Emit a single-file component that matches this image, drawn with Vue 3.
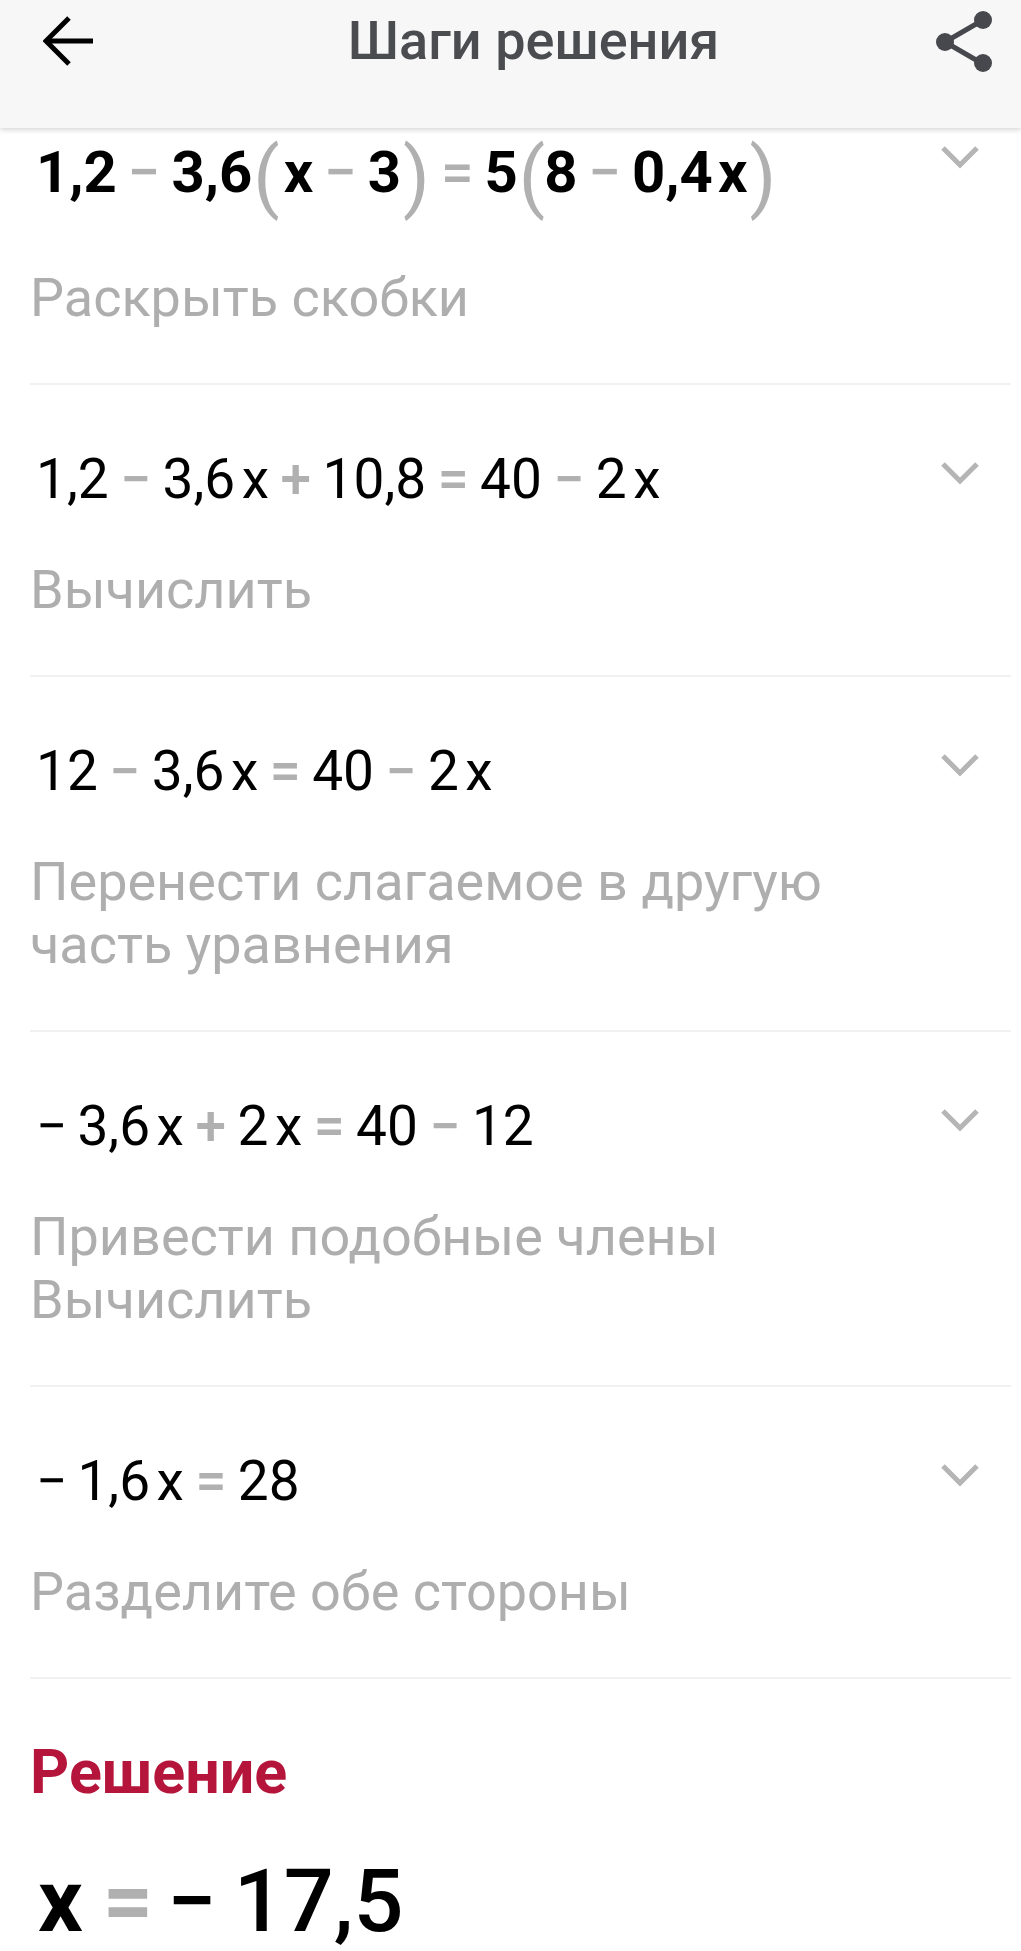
<template>
  <div class="page">
    <header class="top-bar">
      <svg class="back" width="50" height="50" viewBox="0 0 50 50" fill="none" stroke="#000" stroke-width="5">
        <path d="M50 25H3" />
        <path d="M26 2L3 25l23 23" />
      </svg>
      <h1 class="title">Шаги решения</h1>
      <svg class="share" width="60" height="62" viewBox="0 0 60 62" fill="#46484d" stroke="#46484d">
        <path d="M51 10L13 32l38 22" fill="none" stroke-width="5" />
        <circle cx="51" cy="10" r="9" stroke="none" />
        <circle cx="13" cy="32" r="9" stroke="none" />
        <circle cx="51" cy="53" r="9" stroke="none" />
      </svg>
    </header>

    <main class="steps">
      <section v-for="(step, i) in steps" :key="i" class="step" :class="{ first: i === 0 }">
        <div class="step-head">
          <div class="formula">
            <span v-for="(t, j) in step.tokens" :key="j" :class="t[0]">{{ t[1] }}</span>
          </div>
          <svg class="chevron" width="38" height="24" viewBox="0 0 38 24" fill="none" stroke="#b5b5b5" stroke-width="5">
            <path d="M2 3l17 17L36 3" />
          </svg>
        </div>
        <p class="hint">
          <span v-for="line in step.hint" :key="line" class="hint-line">{{ line }}</span>
        </p>
      </section>

      <section class="solution">
        <h2>Решение</h2>
        <div class="answer">
          <span class="x">x</span>
          <span class="op">=</span>
          <span class="minus">−</span>
          <span class="value">17,5</span>
        </div>
      </section>
    </main>
  </div>
</template>

<script setup>
const n = (s) => ['num', s]
const x = ['x', 'x']
const op = (s) => ['op', s]
const lead = ['lead', '−']
const open = ['paren open', '(']
const close = ['paren close', ')']

const steps = [
  {
    tokens: [n('1,2'), op('−'), n('3,6'), open, x, op('−'), n('3'), close, op('='), n('5'), open, n('8'), op('−'), n('0,4'), x, close],
    hint: ['Раскрыть скобки']
  },
  {
    tokens: [n('1,2'), op('−'), n('3,6'), x, op('+'), n('10,8'), op('='), n('40'), op('−'), n('2'), x],
    hint: ['Вычислить']
  },
  {
    tokens: [n('12'), op('−'), n('3,6'), x, op('='), n('40'), op('−'), n('2'), x],
    hint: ['Перенести слагаемое в другую', 'часть уравнения']
  },
  {
    tokens: [lead, n('3,6'), x, op('+'), n('2'), x, op('='), n('40'), op('−'), n('12')],
    hint: ['Привести подобные члены', 'Вычислить']
  },
  {
    tokens: [lead, n('1,6'), x, op('='), n('28')],
    hint: ['Разделите обе стороны']
  }
]
</script>

<style>
html,
body {
  background: #fff;
}
</style>

<style scoped>
.page {
  width: 1021px;
  height: 1951px;
  overflow: hidden;
  font-family: Roboto, "Noto Sans", sans-serif;
  background: #fff;
}

.top-bar {
  position: relative;
  z-index: 2;
  height: 128px;
  box-sizing: border-box;
  padding: 16px 29px 0 43px;
  display: flex;
  justify-content: space-between;
  align-items: flex-start;
  background: #f7f7f7;
  box-shadow: 0 2px 5px rgba(0, 0, 0, 0.16);
}

.title {
  margin: 0 0 0 42px;
  font-size: 54px;
  line-height: 50px;
  font-weight: 500;
  color: #4a4c50;
}

.share {
  margin-top: -6px;
}

.steps {
  padding: 0 10px 0 30px;
}

.step {
  padding: 59px 0 54px;
  border-bottom: 2px solid #f1f1f1;
}

.step.first {
  padding-top: 0;
}

.step-head {
  display: flex;
  justify-content: space-between;
  align-items: flex-start;
  padding-right: 32px;
}

.chevron {
  margin-top: 17px;
}

.formula {
  display: flex;
  align-items: center;
  height: 70px;
  padding-left: 6px;
  font-size: 55px;
  color: #000;
}

.first .formula {
  height: 94px;
  box-sizing: border-box;
  padding-bottom: 6px;
  font-size: 58px;
  font-weight: 700;
}

.op {
  margin: 0 11.5px;
  color: #b0b0b0;
  font-weight: 500;
}

.first .op {
  margin: 0 11px;
}

.lead {
  margin-right: 10px;
}

.x {
  margin-left: 6.5px;
}

.first .x {
  margin-left: 5px;
}

.paren {
  margin: 10px -1px 0 1px;
  font-size: 77px;
  line-height: 70px;
  font-weight: 400;
  color: #b0b0b0;
}

.paren.close {
  margin: 10px 0 0 2px;
}

.hint {
  margin: 44px 0 0;
  font-size: 54px;
  line-height: 63px;
  color: #aeaeae;
}

.hint-line {
  display: block;
}

.solution {
  padding-top: 60px;
}

.solution h2 {
  margin: 0;
  font-size: 61px;
  line-height: 66px;
  font-weight: 700;
  color: #b5153a;
}

.answer {
  display: flex;
  align-items: center;
  margin-top: 46px;
  padding-left: 8px;
  height: 100px;
  line-height: 100px;
  font-size: 88px;
  color: #000;
}

.answer .x {
  margin-left: 0;
  font-weight: 700;
}

.answer .op {
  margin: 0 14px 0 20px;
  font-weight: 700;
}

.minus {
  margin-right: 17px;
  font-weight: 500;
}

.value {
  font-weight: 500;
}
</style>
